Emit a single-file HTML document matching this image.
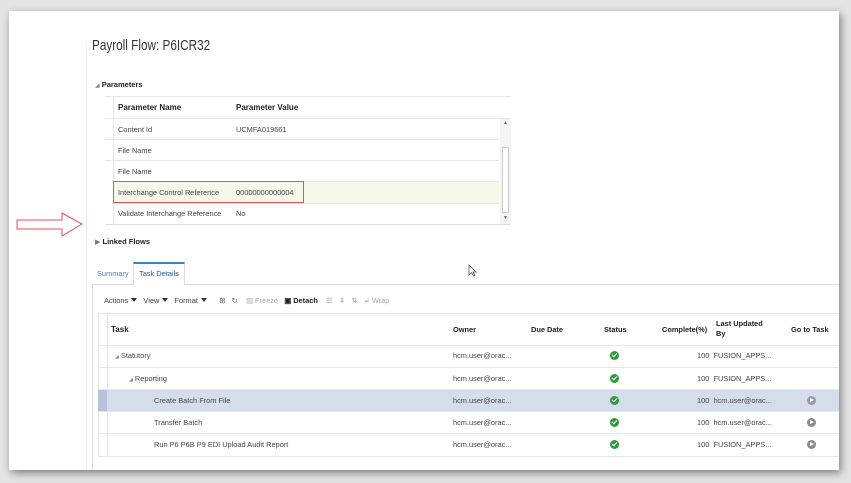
<!DOCTYPE html>
<html><head><style>
*{margin:0;padding:0;box-sizing:border-box}
body{width:851px;height:483px;background:#e4e4e4;position:relative;overflow:hidden;font-family:"Liberation Sans",sans-serif;font-size:7.4px;color:#444}
.panel{position:absolute;left:9px;top:11px;width:830px;height:459px;background:#fff;box-shadow:2px 3px 8px rgba(0,0,0,.45)}
.a{position:absolute;white-space:nowrap}
.b{font-weight:bold;color:#222}
.hl{position:absolute;height:1px;background:#e6e6e6}
.vl{position:absolute;width:1px;background:#e6e6e6}
.ok{position:absolute;width:9px;height:9px;border-radius:50%;background:#2e9a3c}
.ok:after{content:"";position:absolute;left:2px;top:2px;width:4px;height:2px;border-left:1.5px solid #fff;border-bottom:1.5px solid #fff;transform:rotate(-45deg)}
.go{position:absolute;width:9px;height:9px;border-radius:50%;background:#8a8a8a}
.go:after{content:"";position:absolute;left:3px;top:2px;border-left:4px solid #fff;border-top:2.5px solid transparent;border-bottom:2.5px solid transparent}
.tri{display:inline-block;width:0;height:0;border-left:3.5px solid transparent;border-right:3.5px solid transparent;border-top:4px solid #333;margin-left:3px;vertical-align:1px}
.gt{color:#aaa}
</style></head><body>
<div class="panel"></div>
<div class="vl" style="left:86px;top:42px;height:428px;background:#ececec"></div>
<div class="a" style="left:92px;top:38px;font-size:14.5px;color:#333;transform:scaleX(.81);transform-origin:0 0">Payroll Flow: P6ICR32</div>
<div class="a" style="left:95px;top:80px;font-size:7.5px"><span style="color:#888;font-size:6px">◢</span> <b class="b">Parameters</b></div>
<div class="hl" style="left:105px;top:96px;width:406px"></div>
<div class="vl" style="left:113px;top:97px;height:128px"></div>
<div class="a b" style="left:118px;top:103px;font-size:8px">Parameter Name</div>
<div class="a b" style="left:236px;top:103px;font-size:8px">Parameter Value</div>
<div class="hl" style="left:105px;top:118px;width:406px"></div>
<div style="position:absolute;left:113px;top:182px;width:386px;height:21px;background:#f6f8ea"></div>
<div class="a" style="left:118px;top:125px">Content Id</div><div class="a" style="left:236px;top:125px">UCMFA019661</div>
<div class="hl" style="left:105px;top:139px;width:394px"></div>
<div class="a" style="left:118px;top:146px">File Name</div>
<div class="hl" style="left:105px;top:160px;width:394px"></div>
<div class="a" style="left:118px;top:167px">File Name</div>
<div class="hl" style="left:113px;top:181px;width:386px"></div>
<div class="a" style="left:118px;top:188px">Interchange Control Reference</div><div class="a" style="left:236px;top:188px">00000000000004</div>
<div style="position:absolute;left:113px;top:181px;width:191px;height:22px;border:1px solid #e05555"></div>
<div class="hl" style="left:113px;top:203px;width:386px"></div>
<div class="a" style="left:118px;top:209px">Validate Interchange Reference</div><div class="a" style="left:236px;top:209px">No</div>
<div class="hl" style="left:105px;top:224px;width:406px;background:#ddd"></div>
<div style="position:absolute;left:500px;top:119px;width:11px;height:105px;background:#f4f4f4"></div>
<div style="position:absolute;left:502px;top:147px;width:7px;height:66px;background:#fff;border:1px solid #ccc"></div>
<div class="a" style="left:503px;top:120px;font-size:5px;color:#666">▲</div>
<div class="a" style="left:503px;top:215px;font-size:5px;color:#666">▼</div>
<svg style="position:absolute;left:16px;top:212px" width="68" height="26"><path d="M1 8H46V1L66 12L46 24V17H1Z" fill="#fff" stroke="#e05050" stroke-width="1"/></svg>
<div class="a" style="left:95px;top:237px;font-size:7.5px"><span style="color:#777;font-size:7px">▶</span> <b class="b">Linked Flows</b></div>
<div class="a" style="left:97px;top:269px;color:#5a7fa8">Summary</div>
<div style="position:absolute;left:133px;top:262px;width:52px;height:23px;border:1px solid #ddd;border-top:2px solid #3a80c8;border-bottom:none;background:#fff"></div>
<div class="a" style="left:139px;top:269px;color:#2a5a90">Task Details</div>
<div class="hl" style="left:92px;top:284px;width:41px;background:#ddd"></div>
<div class="hl" style="left:185px;top:284px;width:654px;background:#ddd"></div>
<div class="vl" style="left:92px;top:284px;height:186px;background:#ddd"></div>
<div class="a" style="left:104px;top:296px">Actions<span class="tri"></span> &nbsp; View<span class="tri"></span> &nbsp; Format<span class="tri"></span> &nbsp;&nbsp;&nbsp;&nbsp; <span style="color:#666">⊞ &nbsp; ↻</span> &nbsp;&nbsp; <span class="gt">▤ Freeze</span> &nbsp; <b class="b">▣ Detach</b> &nbsp;&nbsp; <span class="gt">☰ &nbsp; ⇞ &nbsp; ⇅ &nbsp; ↲ Wrap</span></div>
<div class="hl" style="left:98px;top:313px;width:741px"></div>
<div class="vl" style="left:98px;top:313px;height:143px"></div>
<div class="vl" style="left:107px;top:313px;height:143px"></div>
<div class="a b" style="left:111px;top:325px;font-size:8px">Task</div>
<div class="a b" style="left:453px;top:325px">Owner</div>
<div class="a b" style="left:531px;top:325px">Due Date</div>
<div class="a b" style="left:604px;top:325px">Status</div>
<div class="a b" style="left:662px;top:325px">Complete(%)</div>
<div class="a b" style="left:716px;top:319px;line-height:10px">Last Updated<br>By</div>
<div class="a b" style="left:791px;top:325px">Go to Task</div>
<div class="hl" style="left:98px;top:345px;width:741px"></div>
<div style="position:absolute;left:98px;top:389px;width:741px;height:22px;background:#d5ddec"></div>
<div style="position:absolute;left:98px;top:389px;width:9px;height:22px;background:#b6c3d8"></div>
<div class="a" style="left:115px;top:351px"><span style="font-size:5px;color:#888">◢</span> Statutory</div>
<div class="a" style="left:129px;top:374px"><span style="font-size:5px;color:#888">◢</span> Reporting</div>
<div class="a" style="left:154px;top:396px">Create Batch From File</div>
<div class="a" style="left:154px;top:418px">Transfer Batch</div>
<div class="a" style="left:154px;top:440px">Run P6 P6B P9 EDI Upload Audit Report</div>
<div class="hl" style="left:98px;top:367px;width:741px"></div>
<div class="hl" style="left:98px;top:389px;width:741px"></div>
<div class="hl" style="left:98px;top:411px;width:741px"></div>
<div class="hl" style="left:98px;top:433px;width:741px"></div>
<div class="hl" style="left:98px;top:456px;width:741px"></div>
<div class="a" style="left:453px;top:351px">hcm.user@orac...</div>
<div class="a" style="left:453px;top:374px">hcm.user@orac...</div>
<div class="a" style="left:453px;top:396px">hcm.user@orac...</div>
<div class="a" style="left:453px;top:418px">hcm.user@orac...</div>
<div class="a" style="left:453px;top:440px">hcm.user@orac...</div>
<div class="ok" style="left:610px;top:351px"></div>
<div class="ok" style="left:610px;top:374px"></div>
<div class="ok" style="left:610px;top:396px"></div>
<div class="ok" style="left:610px;top:418px"></div>
<div class="ok" style="left:610px;top:440px"></div>
<div class="a" style="left:697px;top:351px">100 &nbsp;FUSION_APPS...</div>
<div class="a" style="left:697px;top:374px">100 &nbsp;FUSION_APPS...</div>
<div class="a" style="left:697px;top:396px">100 &nbsp;hcm.user@orac...</div>
<div class="a" style="left:697px;top:418px">100 &nbsp;hcm.user@orac...</div>
<div class="a" style="left:697px;top:440px">100 &nbsp;FUSION_APPS...</div>
<div class="go" style="left:807px;top:396px;background:#9a9a9a"></div>
<div class="go" style="left:807px;top:418px"></div>
<div class="go" style="left:807px;top:440px"></div>
<svg style="position:absolute;left:468px;top:264px" width="9" height="13"><path d="M1 1V11L3.5 8.5L5.5 12L7 11.3L5 8H8Z" fill="#fff" stroke="#555" stroke-width=".8"/></svg>
</body></html>
